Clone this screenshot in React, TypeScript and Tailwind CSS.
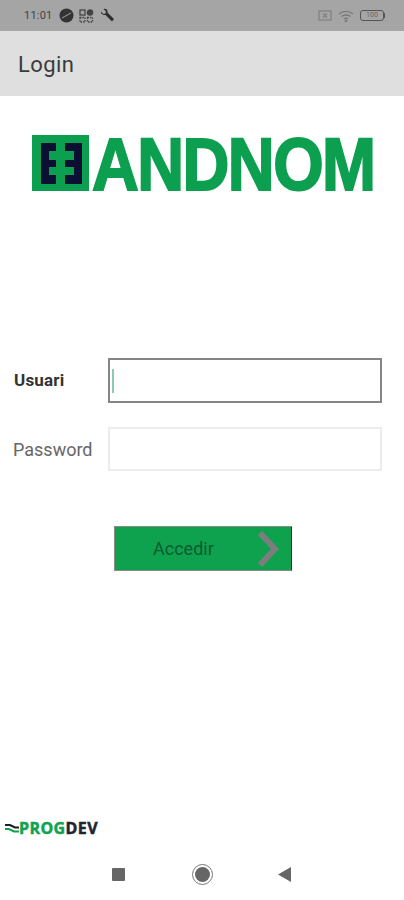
import React from 'react';

function StatusBar() {
    return (
        <div className="h-[31px] bg-[#a5a5a5] flex items-center justify-between pl-6 pr-[19px] text-[#3a3a3a]">
            <div className="flex items-center gap-[5px]">
                <span className="text-[11px] leading-none tracking-[0.2px] text-[#444]">11:01</span>
                <svg width="15" height="15" viewBox="0 0 15 15" className="ml-[2px]">
                    <circle cx="7.5" cy="7.5" r="7" fill="#333" />
                    <path d="M3 10 L12 5" stroke="#8a8a8a" strokeWidth="1.2" />
                </svg>
                <svg width="15" height="14" viewBox="0 0 15 14" fill="none" stroke="#444" strokeWidth="1.3">
                    <rect x="1" y="1" width="5" height="5" />
                    <circle cx="11" cy="3.5" r="2.6" fill="#444" />
                    <rect x="1" y="8.5" width="5" height="4.5" strokeDasharray="1.5 1" />
                    <rect x="8.5" y="8.5" width="5" height="4.5" strokeDasharray="1.5 1" />
                </svg>
                <svg width="15" height="15" viewBox="0 0 15 15" className="ml-[1px]">
                    <path d="M1 3.5 L3.5 6 L5.5 5.5 L6 3.5 L3.5 1 C6 0 8 2 7.5 4.5 L14 11 L12 13.5 L5.5 7 C3 7.5 0.5 6 1 3.5 Z" fill="#2f2f2f" />
                </svg>
            </div>
            <div className="flex items-center gap-[6px]">
                <svg width="14" height="11" viewBox="0 0 14 11" fill="none" stroke="#808080" strokeWidth="1.2">
                    <rect x="1" y="1" width="12" height="9" />
                    <path d="M5 3.5 L9 7.5 M9 3.5 L5 7.5" />
                </svg>
                <svg width="16" height="12" viewBox="0 0 16 12" fill="none" stroke="#777" strokeWidth="1.3">
                    <path d="M1 4 C5 0.5 11 0.5 15 4" />
                    <path d="M3.5 6.5 C6 4.5 10 4.5 12.5 6.5" />
                    <path d="M6 9 C7 8 9 8 10 9" />
                    <circle cx="8" cy="11" r="0.6" fill="#777" />
                </svg>
                <div className="flex items-center">
                    <div className="w-[24px] h-[11px] rounded-[3px] border border-[#555] flex items-center justify-center text-[7px] leading-none text-[#666]">100</div>
                    <div className="w-[1px] h-[5px] bg-[#555]" />
                </div>
            </div>
        </div>
    );
}

function Logo() {
    return (
        <svg width="345" height="58" viewBox="0 0 345 58" className="block overflow-visible">
            <rect x="0" y="1" width="57" height="56" fill="#0c9f4f" />
            <rect x="9" y="9" width="41" height="41" fill="#0b0f33" />
            {/* green centre and notches between the two E shapes */}
            <rect x="24" y="9" width="9" height="41" fill="#0c9f4f" />
            <rect x="17" y="17" width="8" height="9" fill="#0c9f4f" />
            <rect x="17" y="33" width="8" height="8" fill="#0c9f4f" />
            <rect x="33" y="17" width="9" height="9" fill="#0c9f4f" />
            <rect x="33" y="33" width="9" height="8" fill="#0c9f4f" />
            <text
                transform="translate(60 56) scale(0.865 1)"
                fontSize="75"
                fontWeight="700"
                letterSpacing="-1.8"
                fontFamily="'Liberation Sans', Arial, sans-serif"
                fill="#0c9f4f"
                stroke="#0c9f4f"
                strokeWidth="2"
            >
                ANDNOM
            </text>
        </svg>
    );
}

export default function App() {
    return (
        <div className="w-[404px] h-[900px] bg-white flex flex-col overflow-hidden font-['Roboto',sans-serif]">
            <StatusBar />
            <div className="h-[65px] bg-[#dfdfdf] flex items-center pl-[18px] pt-[2px] text-[22px] tracking-[0.4px] text-[#3b3b3b]">Login</div>

            <div className="pl-[32px] pt-[38px]">
                <Logo />
            </div>

            <div className="mt-[166px] pl-[13px] flex flex-col gap-[24px]">
                <div className="flex items-center">
                    <label className="w-[95px] pl-[1px] text-[17px] font-bold text-[#333] tracking-[0.2px]">Usuari</label>
                    <div className="w-[274px] h-[45px] border-2 border-[#858585] flex items-center pl-[2px]">
                        <div className="w-[2px] h-[24px] bg-[#8cc9ae]" />
                    </div>
                </div>
                <div className="flex items-center">
                    <label className="w-[95px] text-[18px] text-[#666]">Password</label>
                    <div className="w-[274px] h-[44px] border-2 border-[#ececec]" />
                </div>
            </div>

            <div className="mt-[55px] ml-[114px] w-[178px] h-[45px] bg-[#0ea24f] border border-[#8a8a8a] border-r-[#1c3a28] flex items-center justify-between pl-[38px] pr-[12px] rounded-[1px]">
                <span className="text-[18px] text-[#0c5a30]">Accedir</span>
                <svg width="22" height="36" viewBox="0 0 22 36" fill="none" stroke="#7d7d7d" strokeWidth="6">
                    <path d="M3 2 L18 18 L3 34" />
                </svg>
            </div>

            <div className="mt-[249px] pl-[5px] flex items-center gap-[0px] h-[16px]">
                <svg width="14" height="10" viewBox="0 0 14 10" fill="none" strokeWidth="2">
                    <path d="M0 2 L5 2 L10 4.5 L14 4.5" stroke="#1b1f2a" />
                    <path d="M0 6 L4 6 L9 8.5 L14 8.5" stroke="#0fa351" />
                </svg>
                <span className="text-[16px] leading-none font-bold tracking-[0.4px] font-['Open_Sans',sans-serif] [-webkit-text-stroke:0.5px]">
                    <span className="text-[#0fa351]">PROG</span>
                    <span className="text-[#1f2430]">DEV</span>
                </span>
            </div>

            <div className="mt-[28px] flex items-center pl-[112px]">
                <div className="w-[13px] h-[13px] bg-[#666] rounded-[1px]" />
                <div className="ml-[67px] w-[21px] h-[21px] rounded-full border border-[#777] flex items-center justify-center">
                    <div className="w-[15px] h-[15px] rounded-full bg-[#666]" />
                </div>
                <svg width="13" height="15" viewBox="0 0 13 15" className="ml-[65px]">
                    <path d="M13 0 V15 L0 7.5 Z" fill="#666" />
                </svg>
            </div>
        </div>
    );
}
